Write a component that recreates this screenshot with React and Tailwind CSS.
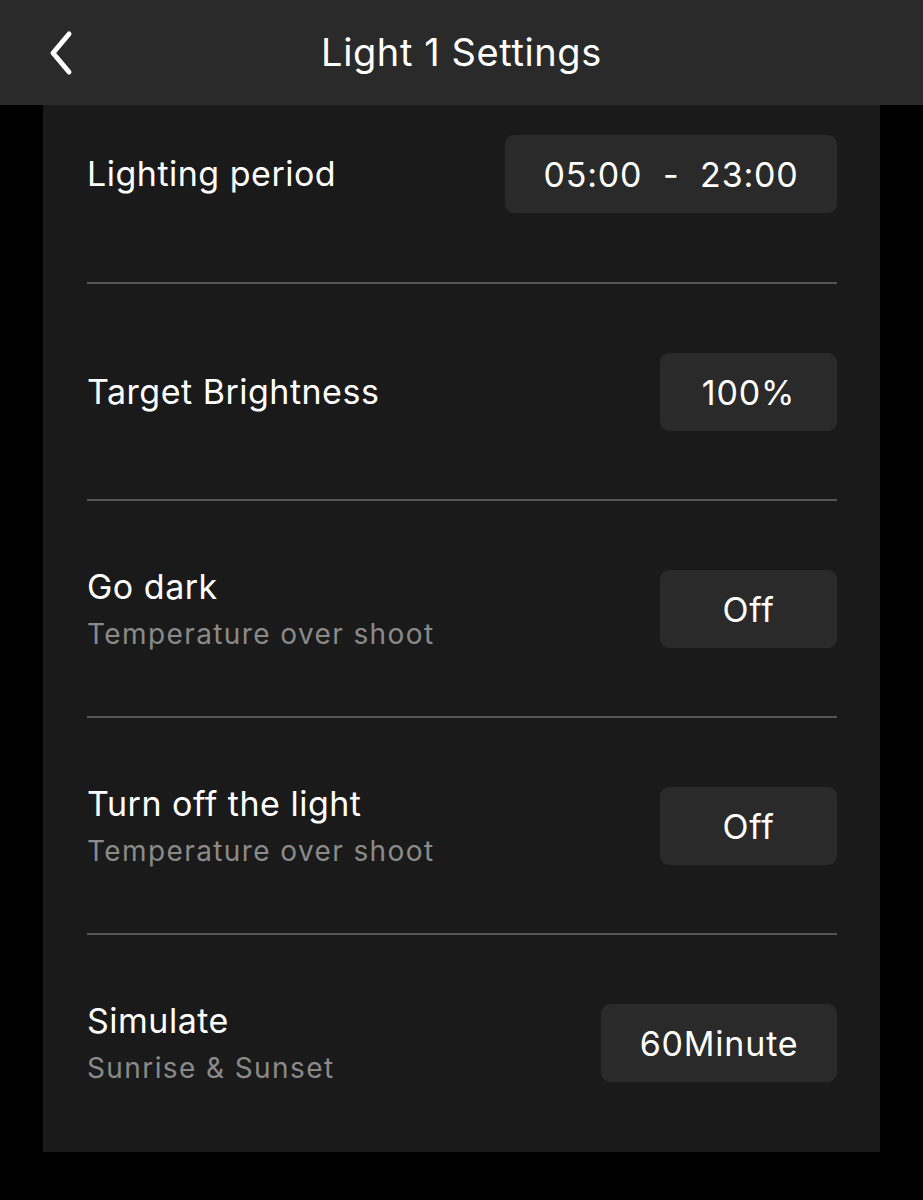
import React from 'react';

const rows = [
  { title: 'Lighting period', value: '05:00  -  23:00', width: 'w-[332px]' },
  { title: 'Target Brightness', value: '100%', width: 'w-[177px]' },
  { title: 'Go dark', subtitle: 'Temperature over shoot', value: 'Off', width: 'w-[177px]' },
  { title: 'Turn off the light', subtitle: 'Temperature over shoot', value: 'Off', width: 'w-[177px]' },
  { title: 'Simulate', subtitle: 'Sunrise & Sunset', value: '60Minute', width: 'w-[236px]' },
];

const App = () => {
  return (
    <div className="min-h-[1200px] bg-black font-['Inter',sans-serif] text-white">
      <header className="flex h-[105px] items-center bg-[#2a2a2a] px-[40px]">
        <button className="flex h-[50px] w-[40px] items-center pl-[4px] text-white">
          <svg width="30" height="46" viewBox="0 0 30 46" fill="none">
            <path d="M25 4 L9 23 L25 42" stroke="white" strokeWidth="5" strokeLinecap="round" strokeLinejoin="round" />
          </svg>
        </button>
        <h1 className="flex-1 pr-[40px] text-center text-[38px] tracking-[0.6px]">Light 1 Settings</h1>
      </header>

      {/* Settings panel */}
      <main className="mx-[43px] bg-[#1a1a1a] pb-[2px] pl-[44px] pr-[43px]">
        {rows.map((row, i) => (
          <div key={row.title}>
            {i > 0 && <div className="h-[2px] bg-[#555555]" />}
            <div className={`flex h-[78px] box-content items-center justify-between ${i === 0 ? 'pt-[30px] pb-[69px]' : 'pt-[69px] pb-[68px]'}`}>
              <div className="flex flex-col">
                <span className="text-[34px] leading-[42px] tracking-[0.5px]">{row.title}</span>
                {row.subtitle && (
                  <span className="mt-[8px] text-[28px] leading-[36px] tracking-[1.4px] text-[#8a8a8a]">{row.subtitle}</span>
                )}
              </div>
              <div className={`flex h-[78px] items-center justify-center whitespace-pre rounded-[9px] bg-[#2a2a2a] text-[34px] tracking-[0.8px] ${row.width}`}>
                {row.value}
              </div>
            </div>
          </div>
        ))}
      </main>
    </div>
  );
};

export default App;
